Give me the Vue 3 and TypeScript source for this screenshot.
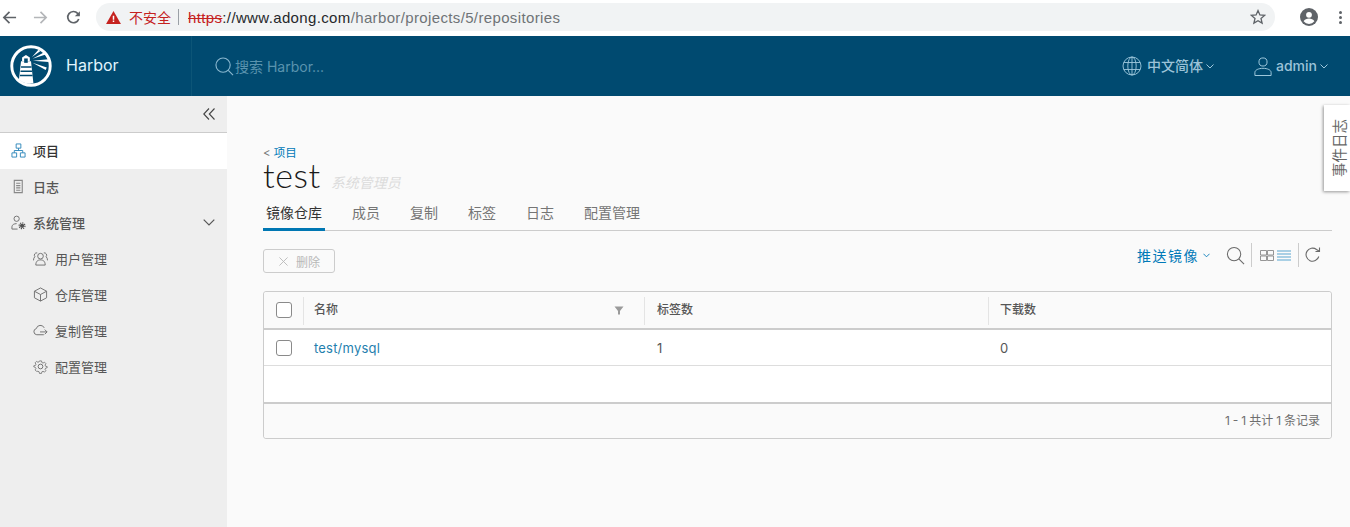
<script setup lang="ts">
const tabs: string[] = ['镜像仓库', '成员', '复制', '标签', '日志', '配置管理']
</script>

<template>
  <div class="page">
    <div class="chrome">
      <svg class="nav-ico back" viewBox="0 0 16 16"><path d="M15 8H2M8 2 2 8l6 6" /></svg>
      <svg class="nav-ico fwd" viewBox="0 0 16 16"><path d="M1 8h13M8 2l6 6-6 6" /></svg>
      <svg class="nav-ico reload" viewBox="0 0 16 16"><path d="M13.6 9.5A6 6 0 1 1 12.4 3.6L14 5.2" /><path class="solid" d="M14.8 1.2v5.4H9.4z" /></svg>
      <div class="omnibox">
        <svg class="warn" viewBox="0 0 16 14"><path d="M8 0 16 14H0z" fill="#c5221f" /><path d="M7.2 5h1.6v4.4H7.2zM7.2 10.3h1.6v1.6H7.2z" fill="#fff" /></svg>
        <span class="unsafe">不安全</span>
        <i class="omni-sep"></i>
        <span class="url"><s class="https">https</s><span class="url-dark">://www.adong.com</span>/harbor/projects/5/repositories</span>
        <svg class="star" viewBox="0 0 16 16"><path d="M8 1.6 9.9 6l4.7.4-3.6 3.1 1.1 4.6L8 11.7l-4.1 2.4L5 9.5 1.4 6.4 6.100 6z" /></svg>
      </div>
      <svg class="avatar" viewBox="0 0 18 18"><circle cx="9" cy="9" r="9" fill="#5f6368" /><circle cx="9" cy="6.800" r="2.900" fill="#fff" /><path d="M3.600 13.300c1-2 3.300-2.800 5.400-2.800s4.400.8 5.400 2.800A7 7 0 0 1 9 16a7 7 0 0 1-5.400-2.700z" fill="#fff" /></svg>
      <span class="dots"><i></i><i></i><i></i></span>
    </div>

    <header class="topbar">
      <div class="brand">
        <svg class="logo" viewBox="0 0 40 40">
          <circle cx="20" cy="20" r="18.300" fill="none" stroke="#fff" stroke-width="2.800" />
          <path d="M8.500 33 10.500 15.500h9.500l2.300 21a17 17 0 0 1-13.800-3.500z" fill="#fff" />
          <path d="M11.500 15.500v-3.500l3.700-2.500 3.700 2.500v3.500z" fill="#fff" />
          <path d="M13.500 12.800h3.400v4.200h-3.400z" fill="#004a70" />
          <path d="M10.500 21h10M10 25h11M9.500 29h12" stroke="#004a70" stroke-width="1.300" />
          <path d="M21 11.500 27 4.500l2 1.200zM21.500 13 32.500 7l1.500 2zM21.800 15 36.500 13.500l.3 2.600zM21.500 17l13.500 4.500-1 2.300z" fill="#fff" />
        </svg>
        <span class="brand-name">Harbor</span>
      </div>
      <div class="search">
        <svg class="search-ico" viewBox="0 0 20 20"><circle cx="8.500" cy="8.500" r="7.500" /><path d="m14 14 5 5" /></svg>
        <span>搜索 Harbor...</span>
      </div>
      <div class="top-right">
        <div class="lang">
          <svg class="globe" viewBox="0 0 20 20"><circle cx="10" cy="10" r="9" /><ellipse cx="10" cy="10" rx="4.200" ry="9" /><path d="M10 1v18M1.800 6.500h16.400M1.800 13.500h16.400" /></svg>
          <span>中文简体</span>
          <svg class="caret" viewBox="0 0 8 5"><path d="m.5.5 3.500 3.500L7.500.5" /></svg>
        </div>
        <div class="user">
          <svg class="person" viewBox="0 0 20 22"><circle cx="10" cy="6" r="4.500" /><path d="M1 21v-3.500c0-2.500 4-4.500 9-4.500s9 2 9 4.500V21z" /></svg>
          <span>admin</span>
          <svg class="caret" viewBox="0 0 8 5"><path d="m.5.5 3.500 3.500L7.500.5" /></svg>
        </div>
      </div>
    </header>

    <div class="body">
      <aside class="sidebar">
        <div class="collapse">
          <svg viewBox="0 0 12 12"><path d="M6 .5.800 6 6 11.500M11.500.5 6.300 6l5.200 5.500" /></svg>
        </div>
        <nav class="nav">
          <a class="item top active">
            <svg class="ico blue" viewBox="0 0 16 16"><path d="M5.500 1h5v4.500h-5zM1 10.500h5V15H1zM10 10.500h5V15h-5zM3.500 10.500V8h9v2.500M8 5.500V8" /></svg>
            <span>项目</span>
          </a>
          <a class="item top">
            <svg class="ico log" viewBox="0 0 16 16"><path d="M3.500 1.500h8.500v13H3.500zM5.500 4.500H10M5.500 7H10M5.500 9.500H10M5.500 12H10" /></svg>
            <span>日志</span>
          </a>
          <a class="item top">
            <svg class="ico" viewBox="0 0 16 16"><circle cx="6" cy="4" r="2.800" /><path d="M1 15v-2.500c0-2 2.200-3.300 5-3.300M1 15h6" /><circle class="gear" cx="11.800" cy="11.500" r="3.100" /><circle class="fill" cx="11.800" cy="11.500" r="2.300" /></svg>
            <span>系统管理</span>
            <svg class="chev" viewBox="0 0 12 7"><path d="M.7.7 6 6l5.300-5.300" /></svg>
          </a>
          <a class="item sub">
            <svg class="ico" viewBox="0 0 16 16"><circle cx="8" cy="5.500" r="3" /><path d="M3 15c0-4 2-5.500 5-5.500s5 1.500 5 5.500zM4.500 2A2.500 2.500 0 0 0 2 6c-1 1-1.500 2.500-1.500 4M11.500 2A2.500 2.500 0 0 1 14 6c1 1 1.500 2.500 1.500 4" /></svg>
            <span>用户管理</span>
          </a>
          <a class="item sub">
            <svg class="ico" viewBox="0 0 16 16"><path d="M8 1 14.500 4.500v7L8 15l-6.500-3.500v-7zM1.500 4.500 8 8l6.500-3.500M8 8v7" /></svg>
            <span>仓库管理</span>
          </a>
          <a class="item sub">
            <svg class="ico" viewBox="0 0 16 16"><path d="M11.500 12.500H4a3.300 3.300 0 0 1-.5-6.500 4.500 4.500 0 0 1 8.500-.8M7.500 9.500H15M12.500 7l2.500 2.500-2.500 2.500" /></svg>
            <span>复制管理</span>
          </a>
          <a class="item sub">
            <svg class="ico" viewBox="0 0 16 16"><circle cx="8" cy="8" r="2.500" /><path d="m6.700 1h2.600l.4 2 1.500.7 1.800-1.100 1.800 1.800-1.100 1.800.7 1.500 2 .4v1.400l-2 .6-.7 1.500 1.100 1.700-1.800 1.800-1.800-1.100-1.500.7-.4 2H6.700l-.4-2-1.500-.7L3 14.100l-1.800-1.800 1.100-1.700-.7-1.500-2-.6V7.100l2-.4.700-1.500-1.100-1.800L3 1.600l1.800 1.100 1.500-.7z" transform="translate(1.200 1.200) scale(.85)" /></svg>
            <span>配置管理</span>
          </a>
        </nav>
      </aside>

      <main class="content">
        <a class="crumb"><span class="lt">&lt;</span> 项目</a>
        <div class="title-row">
          <h1>test</h1>
          <em>系统管理员</em>
        </div>
        <div class="tabs">
          <span v-for="(t, i) in tabs" :key="t" class="tab" :class="{ on: i === 0 }">{{ t }}</span>
        </div>
        <div class="toolbar">
          <button class="del" type="button" disabled>
            <svg viewBox="0 0 10 10"><path d="m.5.500 9 9M9.500.500l-9 9" /></svg>
            <span>删除</span>
          </button>
          <div class="tools">
            <span class="push">推送镜像</span>
            <svg class="push-caret" viewBox="0 0 8 5"><path d="m.5.5 3.500 3.500L7.500.5" /></svg>
            <svg class="mag" viewBox="0 0 20 20"><circle cx="8.500" cy="8.500" r="7" /><path d="m13.500 13.500 5.500 5.500" /></svg>
            <i class="vsep"></i>
            <svg class="cards" viewBox="0 0 14 11"><path d="M.5.500h6v4.500h-6zM7.500.500h6v4.500h-6zM.5 6h6v4.500h-6zM7.500 6h6v4.500h-6z" /></svg>
            <svg class="lines" viewBox="0 0 14 11"><path d="M0 1h14M0 4h14M0 7h14M0 10h14" /></svg>
            <i class="vsep second"></i>
            <svg class="refresh" viewBox="0 0 16 16"><path d="M13.800 9.500A6.500 6.500 0 1 1 11.500 2.500L14 4" /><path d="M14.500 .5V4.500H10.500" /></svg>
          </div>
        </div>
        <div class="grid">
          <div class="row head">
            <div class="cell c-check"><span class="box"></span></div>
            <div class="cell c-name divider">
              <span class="label">名称</span>
              <svg class="filter" viewBox="0 0 10 9"><path d="M.5.500h9L6 5v3.500L4 8.500V5z" /></svg>
            </div>
            <div class="cell c-tags divider"><span class="label">标签数</span></div>
            <div class="cell c-pulls divider"><span class="label">下载数</span></div>
          </div>
          <div class="row data">
            <div class="cell c-check"><span class="box"></span></div>
            <div class="cell c-name"><a class="repo">test/mysql</a></div>
            <div class="cell c-tags">1</div>
            <div class="cell c-pulls">0</div>
          </div>
          <div class="filler"></div>
          <div class="foot">1 - 1 共计 1 条记录</div>
        </div>
      </main>
    </div>

    <div class="event-tab"><span>事件日志</span></div>
  </div>
</template>

<style>
html, body { margin: 0; padding: 0; background: #fafafa; }
</style>

<style scoped>
* { box-sizing: border-box; }
.page {
  --cjk: Inter, "Noto Sans CJK SC", sans-serif;
  position: relative;
  width: 1350px;
  height: 527px;
  overflow: hidden;
  display: flex;
  flex-direction: column;
  font-family: var(--cjk);
  color: #565656;
  background: #fafafa;
}
svg { display: block; flex: none; fill: none; }

.chrome {
  height: 36px;
  flex: none;
  background: #fff;
  display: flex;
  align-items: center;
  padding: 0 0 2px 2px;
}
.nav-ico { width: 15px; height: 15px; stroke-width: 1.800; }
.nav-ico path { stroke: currentColor; fill: none; }
.back { color: #5f6368; }
.fwd { color: #b4b6b9; margin-left: 16px; }
.reload { color: #5f6368; margin-left: 18px; }
.nav-ico .solid { fill: currentColor; stroke: none; }
.omnibox {
  width: 1179px;
  height: 28px;
  margin-left: 15px;
  border-radius: 14px;
  background: #f1f3f4;
  display: flex;
  align-items: center;
  padding: 0 9px 0 10px;
  font-family: "Liberation Sans", "Noto Sans CJK SC", sans-serif;
  font-size: 15px;
}
.warn { width: 15px; height: 13px; }
.unsafe { color: #c5221f; font-size: 14px; margin-left: 8px; }
.omni-sep { width: 1px; height: 16px; background: #9aa0a6; margin: 0 9px 0 7px; }
.url { color: #6f7377; letter-spacing: .36px; }
.url-dark { color: #26282b; }
.https { color: #c5221f; }
.star { width: 16px; height: 16px; margin-left: auto; stroke: #5f6368; stroke-width: 1.300; }
.avatar { width: 18px; height: 18px; margin-left: 25px; }
.dots { display: flex; flex-direction: column; gap: 2px; margin-left: 21px; }
.dots i { width: 3px; height: 3px; border-radius: 50%; background: #5f6368; }

.topbar {
  height: 60px;
  flex: none;
  background: #004a70;
  display: flex;
  align-items: center;
}
.brand {
  width: 192px;
  height: 60px;
  flex: none;
  display: flex;
  align-items: center;
  padding-left: 10px;
  border-right: 1px solid #0c5577;
}
.logo { width: 42px; height: 42px; }
.brand-name { color: #e1f5fe; font-size: 16px; margin-left: 14px; padding-bottom: 2px; }
.search {
  display: flex;
  align-items: center;
  margin-left: 23px;
  color: #5a93ae;
  font-size: 14px;
}
.search-ico { width: 19px; height: 19px; stroke: #89b7cf; stroke-width: 1.200; margin-right: 1px; }
.top-right { margin-left: auto; display: flex; align-items: center; padding-right: 22px; }
.lang, .user {
  display: flex;
  align-items: center;
  color: #9cc3d8;
  font-size: 14px;
  font-weight: 500;
}
.lang span, .user span { margin-top: -2px; }
.globe { width: 20px; height: 20px; stroke: #9fc8dd; stroke-width: .9; margin-right: 5px; }
.caret { width: 8px; height: 5px; margin-left: 3px; stroke: #9fc8dd; stroke-width: 1; }
.user { margin-left: 40px; }
.person { width: 18px; height: 21px; stroke: #9fc8dd; stroke-width: 1.100; margin-right: 4px; }

.body { flex: 1; display: flex; min-height: 0; }
.sidebar { width: 227px; flex: none; background: #eee; }
.collapse {
  height: 37px;
  border-bottom: 1px solid #ccc;
  display: flex;
  align-items: center;
  justify-content: flex-end;
  padding-right: 12px;
}
.collapse svg { width: 12px; height: 12px; stroke: #444; stroke-width: 1.100; }
.item {
  height: 36px;
  display: flex;
  align-items: center;
  padding-bottom: 2px;
  font-size: 13px;
  color: #565656;
}
.top { padding-left: 11px; font-weight: 500; }
.sub { padding-left: 33px; }
.active { background: #fff; color: #333; }
.ico { width: 15px; height: 15px; stroke: #6e6e6e; stroke-width: 1; margin-right: 7px; }
.ico.blue { stroke: #2f87bb; }
.ico.log { stroke: #888; stroke-width: 1.200; }
.ico .fill { fill: #505050; stroke: none; }
.ico .gear { stroke: #505050; stroke-dasharray: 1.300 1.100; stroke-width: 1.300; }
.chev { width: 12px; height: 7px; stroke: #565656; stroke-width: 1.200; margin-left: auto; margin-right: 12px; }

.content { flex: 1; padding: 49px 18px 0 36px; min-width: 0; }
.crumb { display: block; height: 16px; line-height: 16px; font-size: 11.500px; color: #0079b8; }
.crumb .lt { color: #777; }
.title-row { height: 33px; display: flex; align-items: baseline; }
h1 {
  margin: 0;
  font-size: 34px;
  line-height: 28px;
  font-weight: 300;
  color: #1a1a1a;
  font-family: Lato, var(--cjk);
  letter-spacing: .6px;
}
.title-row em { margin-left: 10px; font-size: 14px; color: #dcdcdc; font-style: italic; }
.tabs {
  height: 37px;
  display: flex;
  align-items: flex-start;
  gap: 24px;
  border-bottom: 1px solid #ccc;
  padding-top: 10px;
}
.tab {
  height: 27px;
  flex: none;
  padding: 0 3px;
  line-height: 17px;
  font-size: 14px;
  color: #757575;
}
.tab.on { color: #333; border-bottom: 3px solid #0077b3; }
.toolbar {
  display: flex;
  align-items: flex-start;
  justify-content: space-between;
  margin: 18px 0;
  height: 24px;
}
.del {
  width: 72px;
  height: 24px;
  padding: 0 0 0 15px;
  display: flex;
  align-items: center;
  gap: 8px;
  background: transparent;
  border: 1px solid #ccc;
  border-radius: 3px;
  color: #b8b8b8;
  font: 12px var(--cjk);
}
.del svg { width: 9px; height: 9px; stroke: #b8b8b8; stroke-width: 1; }
.tools { display: flex; align-items: center; height: 24px; margin-right: 11px; margin-top: -6px; }
.push { color: #0079b8; font-size: 14px; letter-spacing: 1.500px; }
.push-caret { width: 7px; height: 5px; margin-left: 4px; stroke: #0079b8; stroke-width: 1; }
.mag { width: 19px; height: 19px; margin-left: 16px; stroke: #6a6a6a; stroke-width: 1.100; }
.vsep { width: 1px; height: 24px; background: #ccc; margin-left: 6px; }
.vsep.second { margin-left: 7px; }
.cards { width: 14px; height: 11px; margin-left: 8px; stroke: #8a8a8a; stroke-width: .9; }
.lines { width: 14px; height: 11px; margin-left: 3px; stroke: #58a5cf; stroke-width: 1; }
.refresh { width: 16px; height: 16px; margin-left: 6px; stroke: #6a6a6a; stroke-width: 1.100; }

.grid {
  width: 1069px;
  height: 148px;
  border: 1px solid #ccc;
  border-radius: 3px;
  background: #fff;
  font-size: 12px;
  display: flex;
  flex-direction: column;
}
.row { display: grid; grid-template-columns: 39px 341px 344px 1fr; flex: none; }
.head {
  height: 38px;
  background: #fafafa;
  border-bottom: 2px solid #ccc;
  color: #565656;
  font-weight: 500;
  border-radius: 3px 3px 0 0;
  padding-bottom: 3px;
}
.data { height: 36px; border-bottom: 1px solid #ddd; color: #565656; }
.cell { display: flex; align-items: center; padding-left: 12px; font-family: var(--cjk); }
.head .cell { padding-top: 2px; }
.label { margin-top: -2px; }
.data .cell { font-size: 13px; }
.c-check { padding-left: 12px; }
.divider { position: relative; }
.divider::before {
  content: "";
  position: absolute;
  left: 0;
  top: 5px;
  bottom: 0;
  width: 1px;
  background: #e4e4e4;
}
.c-name { justify-content: space-between; padding-left: 11px; padding-right: 20px; }
.head .c-tags, .data .c-tags { padding-left: 13px; }
.head .c-pulls, .data .c-pulls { padding-left: 12px; }
.box {
  width: 16px;
  height: 16px;
  border: 1px solid #8a8a8a;
  border-radius: 3px;
  background: #fff;
}
.filter { width: 10px; height: 9px; fill: #9a9a9a; margin-top: 1px; }
.repo { color: #1f7fae; letter-spacing: .2px; }
.filler { height: 38px; flex: none; border-bottom: 2px solid #ccc; }
.foot {
  flex: 1;
  background: #fafafa;
  display: flex;
  align-items: center;
  justify-content: flex-end;
  padding: 0 11px 4px 0;
  font-size: 12px;
  word-spacing: -.4px;
  color: #6e6e6e;
  border-radius: 0 0 3px 3px;
}

.event-tab {
  position: absolute;
  right: 0;
  top: 105px;
  width: 26px;
  height: 86px;
  padding-left: 3px;
  background: #fff;
  box-shadow: -1px 1px 3px rgba(0, 0, 0, .4);
  display: flex;
  align-items: center;
  justify-content: center;
}
.event-tab span {
  writing-mode: vertical-rl;
  text-orientation: sideways;
  transform: rotate(180deg);
  font-size: 14.500px;
  color: #666;
  white-space: nowrap;
}
</style>
